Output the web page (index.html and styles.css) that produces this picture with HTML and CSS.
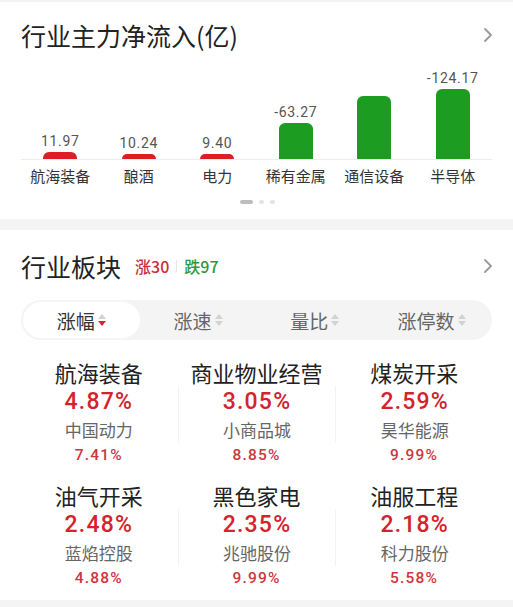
FILE: index.html
```html
<!DOCTYPE html>
<html lang="zh-CN">
<head>
<meta charset="utf-8">
<link rel="stylesheet" href="styles.css">
</head>
<body>
<section class="card flow">
  <div class="head">
    <h2 class="title">行业主力净流入(亿)</h2>
    <svg class="chev" viewBox="0 0 10 16" width="10" height="16"><path d="M2 2 L8 8 L2 14" fill="none" stroke="#9a9a9a" stroke-width="1.8" stroke-linecap="round" stroke-linejoin="round"/></svg>
  </div>
  <div class="chart">
    <div class="col"><span class="val">11.97</span><span class="bar up" style="height:7px"></span></div>
    <div class="col"><span class="val">10.24</span><span class="bar up" style="height:5px"></span></div>
    <div class="col"><span class="val">9.40</span><span class="bar up" style="height:5px"></span></div>
    <div class="col"><span class="val">-63.27</span><span class="bar down" style="height:36px"></span></div>
    <div class="col"><span class="val ghost">-113.50</span><span class="bar down" style="height:63px"></span></div>
    <div class="col"><span class="val">-124.17</span><span class="bar down" style="height:70px"></span></div>
  </div>
  <div class="labels">
    <span>航海装备</span><span>酿酒</span><span>电力</span><span>稀有金属</span><span>通信设备</span><span>半导体</span>
  </div>
  <div class="dots"><i class="dash"></i><i></i><i></i></div>
</section>

<section class="card sectors">
  <div class="head head2">
    <div class="tgroup">
      <h2 class="title">行业板块</h2>
      <span class="rise">涨30</span><span class="sep"></span><span class="fall">跌97</span>
    </div>
    <svg class="chev" viewBox="0 0 10 16" width="10" height="16"><path d="M2 2 L8 8 L2 14" fill="none" stroke="#9a9a9a" stroke-width="1.8" stroke-linecap="round" stroke-linejoin="round"/></svg>
  </div>
  <div class="tabs">
    <div class="tab active">涨幅<span class="sort"><i class="tri-up"></i><i class="tri-down on"></i></span></div>
    <div class="tab">涨速<span class="sort"><i class="tri-up"></i><i class="tri-down"></i></span></div>
    <div class="tab">量比<span class="sort"><i class="tri-up"></i><i class="tri-down"></i></span></div>
    <div class="tab">涨停数<span class="sort"><i class="tri-up"></i><i class="tri-down"></i></span></div>
  </div>
  <div class="grid">
    <div class="cell"><div class="name">航海装备</div><div class="body"><div class="pct">4.87%</div><div class="stock">中国动力</div></div><div class="spct">7.41%</div></div>
    <div class="cell"><div class="name">商业物业经营</div><div class="body line"><div class="pct">3.05%</div><div class="stock">小商品城</div></div><div class="spct">8.85%</div></div>
    <div class="cell"><div class="name">煤炭开采</div><div class="body line"><div class="pct">2.59%</div><div class="stock">昊华能源</div></div><div class="spct">9.99%</div></div>
    <div class="cell"><div class="name">油气开采</div><div class="body"><div class="pct">2.48%</div><div class="stock">蓝焰控股</div></div><div class="spct">4.88%</div></div>
    <div class="cell"><div class="name">黑色家电</div><div class="body line"><div class="pct">2.35%</div><div class="stock">兆驰股份</div></div><div class="spct">9.99%</div></div>
    <div class="cell"><div class="name">油服工程</div><div class="body line"><div class="pct">2.18%</div><div class="stock">科力股份</div></div><div class="spct">5.58%</div></div>
  </div>
</section>
</body>
</html>
```

FILE: styles.css
```css
* { box-sizing: border-box; margin: 0; padding: 0; }
html, body { width: 513px; height: 607px; overflow: hidden; }
body {
  background: #f4f4f4;
  font-family: "Noto Sans CJK SC", "Noto Sans", sans-serif;
  color: #222;
  padding-top: 2px;
}
.card { background: #fff; }
.flow { height: 217px; }
.sectors { margin-top: 11px; height: 370px; }

.head {
  height: 68px;
  padding: 0 20px 3px 21px;
  display: flex;
  align-items: center;
  justify-content: space-between;
}
.title {
  font-size: 25px;
  font-weight: 400;
  line-height: 34px;
  color: #222;
}
.chev { display: block; }

.chart {
  height: 90px;
  margin: 0 21px;
  display: flex;
  border-bottom: 1px solid #ececec;
}
.col {
  flex: 1;
  display: flex;
  flex-direction: column;
  align-items: center;
  justify-content: flex-end;
}
.val {
  font-family: Roboto, "Noto Sans", sans-serif;
  font-size: 14px;
  line-height: 16px;
  color: #555;
  letter-spacing: 0.7px;
  margin-bottom: 3px;
}
.val.ghost { color: transparent; }
.bar { display: block; width: 34px; border-radius: 6px 6px 0 0; }
.bar.up { background: #dc1f26; }
.bar.down { background: #1c9c21; }

.labels {
  display: flex;
  margin: 0 21px;
  padding-top: 6px;
}
.labels span {
  flex: 1;
  text-align: center;
  font-size: 15px;
  line-height: 20px;
  color: #333;
}
.dots {
  display: flex;
  justify-content: center;
  gap: 6px;
  margin-top: 14px;
  padding-left: 2px;
}
.dots i { display: block; width: 5px; height: 4px; border-radius: 2px; background: #e3e3e3; }
.dots i.dash { width: 13px; background: #bdbdbd; }

.head2 { height: 70px; align-items: flex-start; padding-top: 19px; padding-bottom: 0; }
.head2 .chev { margin-top: 9px; }
.tgroup { display: flex; align-items: center; }
.rise, .fall {
  font-size: 16px;
  line-height: 34px;
  font-weight: 500;
}
.rise { color: #c9303a; margin-left: 14px; }
.fall { color: #2f9a3c; }
.sep { width: 1px; height: 12px; background: #e6e6e6; margin: 0 7px; }

.tabs {
  margin: 0 21px;
  height: 40px;
  padding: 2px;
  border-radius: 20px;
  background: #f4f4f4;
  display: flex;
}
.tab {
  flex: 1;
  display: flex;
  align-items: center;
  justify-content: center;
  font-size: 19px;
  color: #666;
  border-radius: 18px;
}
.tab.active { background: #fff; color: #333; }
.sort { display: flex; flex-direction: column; gap: 2px; margin-left: 3px; }
.sort i {
  display: block;
  width: 0; height: 0;
  border-left: 4.5px solid transparent;
  border-right: 4.5px solid transparent;
}
.tri-up { border-bottom: 5px solid #d2d2d2; }
.tri-down { border-top: 5px solid #d2d2d2; }
.tri-down.on { border-top-color: #d8262e; }

.grid {
  margin: 0 20px;
  padding-top: 18px;
  display: grid;
  grid-template-columns: repeat(3, 1fr);
  row-gap: 13px;
}
.cell { text-align: center; }
.name {
  font-size: 22px;
  line-height: 28px;
  color: #222;
}
.body.line { border-left: 1px solid #f3f3f3; }
.pct {
  font-family: Roboto, "Noto Sans", sans-serif;
  font-weight: 500;
  font-size: 23px;
  line-height: 31px;
  letter-spacing: 1.2px;
  color: #d3232d;
}
.stock {
  font-size: 17px;
  line-height: 26px;
  color: #666;
}
.spct {
  font-family: Roboto, "Noto Sans", sans-serif;
  font-weight: 500;
  font-size: 15.5px;
  line-height: 25px;
  letter-spacing: 1.2px;
  color: #d0343c;
}
```
